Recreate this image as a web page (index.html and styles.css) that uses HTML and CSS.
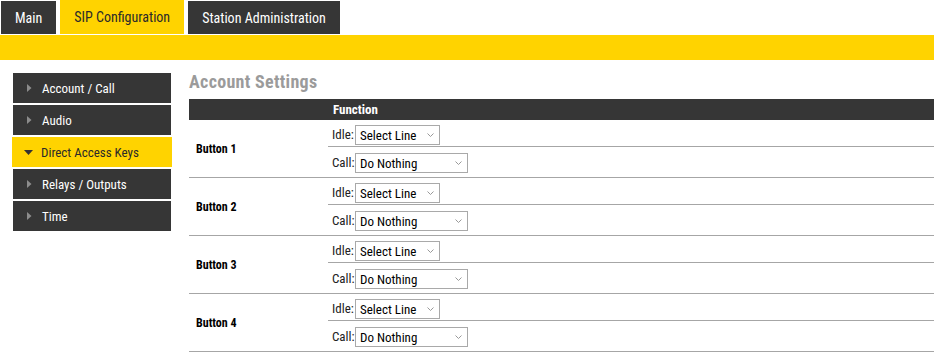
FILE: index.html
```html
<!DOCTYPE html>
<html lang="en">
<head>
    <meta charset="UTF-8">
    <title>SIP Configuration - Account Settings</title>
    <link rel="stylesheet" href="styles.css">
</head>
<body>
    <nav class="tabs">
        <a class="tab">Main</a>
        <a class="tab active">SIP Configuration</a>
        <a class="tab">Station Administration</a>
    </nav>
    <div class="tab-bar"></div>

    <div class="page">
        <ul class="sidebar">
            <li class="side-item">
                <svg class="caret" width="5" height="8" viewBox="0 0 5 8"><path d="M0 0 L4.5 4 L0 8 Z"/></svg>
                Account / Call
            </li>
            <li class="side-item">
                <svg class="caret" width="5" height="8" viewBox="0 0 5 8"><path d="M0 0 L4.5 4 L0 8 Z"/></svg>
                Audio
            </li>
            <li class="side-item open">
                <svg class="caret-down" width="9" height="5" viewBox="0 0 9 5"><path d="M0 0 L9 0 L4.5 5 Z"/></svg>
                Direct Access Keys
            </li>
            <li class="side-item">
                <svg class="caret" width="5" height="8" viewBox="0 0 5 8"><path d="M0 0 L4.5 4 L0 8 Z"/></svg>
                Relays / Outputs
            </li>
            <li class="side-item">
                <svg class="caret" width="5" height="8" viewBox="0 0 5 8"><path d="M0 0 L4.5 4 L0 8 Z"/></svg>
                Time
            </li>
        </ul>

        <div class="content">
            <h2>Account Settings</h2>
            <table class="keys">
                <thead>
                    <tr>
                        <th class="col-name"></th>
                        <th>Function</th>
                    </tr>
                </thead>
                <tbody id="keysBody"></tbody>
            </table>
        </div>
    </div>

    <script>
        const BUTTON_COUNT = 4;
        const body = document.getElementById('keysBody');

        for (let i = 1; i <= BUTTON_COUNT; i++) {
            const idle = document.createElement('tr');
            idle.innerHTML = `
                <td class="name" rowspan="2">Button ${i}</td>
                <td class="fn"><div class="fn-line idle"><label>Idle:</label><select class="sel-line"><option>Select Line</option></select></div></td>
            `;
            const call = document.createElement('tr');
            call.innerHTML = `
                <td class="fn"><div class="fn-line call"><label>Call:</label><select class="sel-action"><option>Do Nothing</option></select></div></td>
            `;
            body.appendChild(idle);
            body.appendChild(call);
        }
    </script>
</body>
</html>
```

FILE: styles.css
```css
body {
    margin: 0;
    font-family: "Roboto Condensed", Roboto, sans-serif;
    font-stretch: 75%;
    color: #222;
    background: #fff;
}

.tabs {
    display: flex;
    gap: 4px;
    padding-left: 1px;
    height: 34px;
}

.tab {
    display: flex;
    align-items: center;
    margin-top: 1px;
    padding: 0 14px;
    background-color: #363636;
    color: #fff;
    font-size: 14px;
    font-weight: 400;
}

.tab.active {
    margin-top: 0;
    background-color: #ffd300;
    color: #2a2a2a;
}

.tab-bar {
    height: 25px;
    margin-top: 1px;
    background-color: #ffd300;
}

.page {
    display: flex;
    padding: 13px 0 0 13px;
}

.sidebar {
    list-style: none;
    margin: 0;
    padding: 0;
    width: 158px;
    display: flex;
    flex-direction: column;
    gap: 2px;
}

.side-item {
    display: flex;
    align-items: center;
    height: 30px;
    padding-left: 14px;
    background-color: #363636;
    color: #fff;
    font-size: 13px;
    font-weight: 400;
}

.caret {
    fill: #8c8c8c;
    margin-right: 10px;
}

.side-item.open {
    margin: 0 -1px;
    padding-left: 12px;
    background-color: #ffd300;
    color: #2a2a2a;
}

.caret-down {
    fill: #333;
    margin-right: 8px;
}

.content {
    flex: 1;
    margin-left: 18px;
}

h2 {
    margin: 0;
    height: 26px;
    font-size: 18px;
    letter-spacing: 0.3px;
    font-weight: 700;
    color: #9b9b9b;
    line-height: 17px;
}

.keys {
    width: 100%;
    border-collapse: collapse;
}

.keys th {
    height: 21px;
    padding: 0 5px;
    background-color: #363636;
    color: #fff;
    font-size: 13px;
    font-weight: 700;
    text-align: left;
}

.keys .col-name {
    width: 129px;
}

.name {
    padding: 0 7px;
    font-size: 12px;
    font-weight: 700;
    color: #000;
    border-bottom: 1px solid #a6a6a6;
}

.fn {
    padding: 0 4px;
    border-bottom: 1px solid #a6a6a6;
}

.fn-line {
    display: flex;
    align-items: flex-start;
    box-sizing: border-box;
    font-size: 13px;
}

.fn-line.idle {
    height: 26px;
    padding-top: 5px;
}

.fn-line.call {
    height: 30px;
    padding-top: 6px;
}

.fn-line label {
    width: 23px;
    height: 20px;
    line-height: 20px;
}

select {
    appearance: none;
    box-sizing: border-box;
    height: 20px;
    padding: 0 4px;
    border: 1px solid #a9a9a9;
    border-radius: 0;
    background: #fff url("data:image/svg+xml,%3Csvg xmlns='http://www.w3.org/2000/svg' width='7' height='4'%3E%3Cpath d='M0.5 0.5 L3.5 3.5 L6.5 0.5' fill='none' stroke='%23999' stroke-width='1'/%3E%3C/svg%3E") no-repeat right 5px center;
    font-family: inherit;
    font-stretch: inherit;
    font-size: 13px;
    color: #000;
}

.sel-line {
    width: 85px;
}

.sel-action {
    width: 113px;
}
```
